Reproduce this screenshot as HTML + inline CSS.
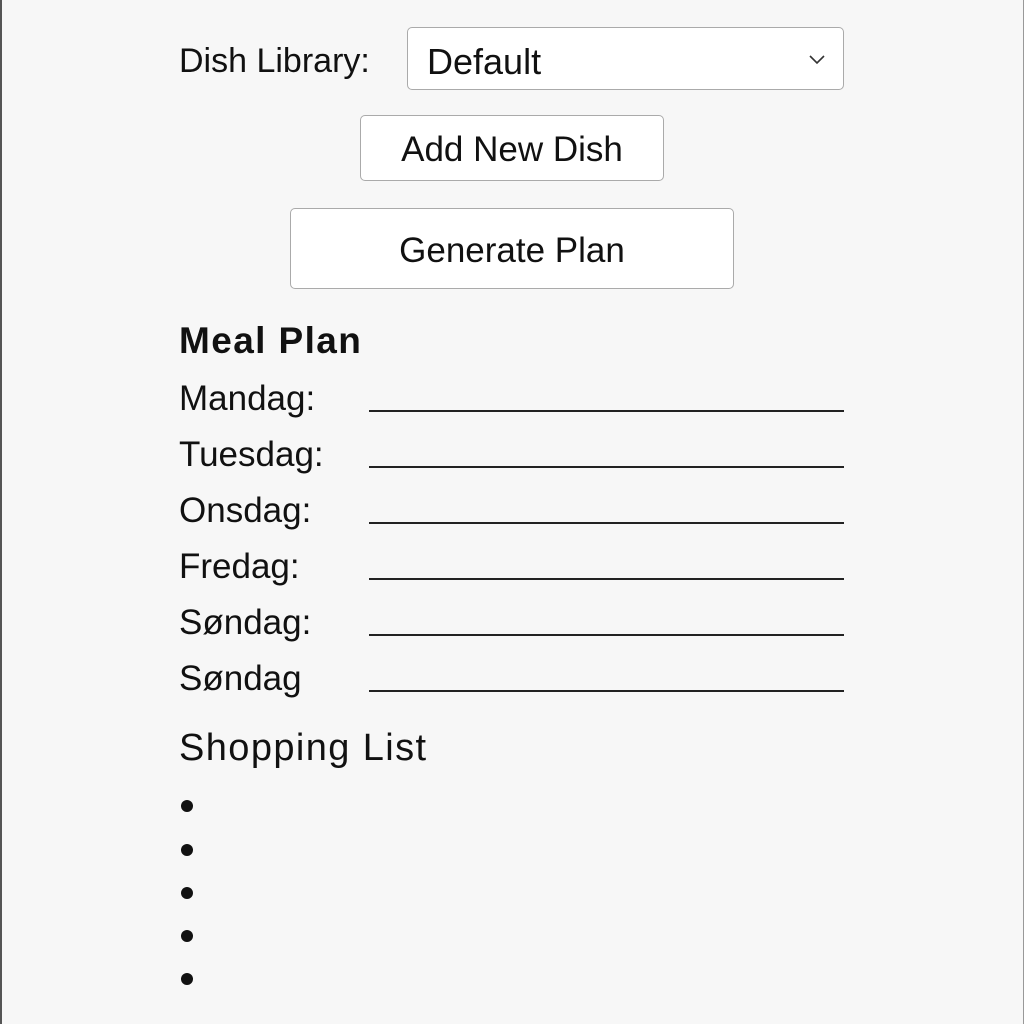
<!DOCTYPE html>
<html><head><style>
body{margin:0;width:1024px;height:1024px;background:#f7f7f7;font-family:"Liberation Sans",sans-serif;color:#111;position:relative;overflow:hidden}
.b{position:absolute;left:0;top:0;width:2px;height:1024px;background:#555}
.br{position:absolute;right:0;top:0;width:1px;height:1024px;background:#999}
.t{position:absolute;white-space:nowrap;line-height:1}
.box{position:absolute;background:#fff;border:1px solid #aaa;border-radius:5px;box-sizing:border-box}
.ln{position:absolute;left:369px;width:475px;height:2px;background:#222}
.dot{position:absolute;left:181px;width:12px;height:12px;border-radius:50%;background:#111}
</style></head><body>
<div class="b"></div><div class="br"></div>
<div class="t" style="left:179px;top:44px;font-size:34px">Dish Library:</div>
<div class="box" style="left:407px;top:27px;width:437px;height:63px"></div>
<div class="t" style="left:427px;top:44px;font-size:36px">Default</div>
<svg style="position:absolute;left:808px;top:53px" width="18" height="12"><path d="M2 3 L9 10 L16 3" fill="none" stroke="#333" stroke-width="1.6"/></svg>
<div class="box" style="left:360px;top:115px;width:304px;height:66px"></div>
<div class="t" style="left:360px;width:304px;text-align:center;top:132px;font-size:35px">Add New Dish</div>
<div class="box" style="left:290px;top:208px;width:444px;height:81px"></div>
<div class="t" style="left:290px;width:444px;text-align:center;top:233px;font-size:35px">Generate Plan</div>
<div class="t" style="left:179px;top:322px;font-size:37px;font-weight:bold;letter-spacing:1.4px">Meal Plan</div>
<div class="t" style="left:179px;top:381px;font-size:35px">Mandag:</div><div class="ln" style="top:410px"></div>
<div class="t" style="left:179px;top:437px;font-size:35px">Tuesdag:</div><div class="ln" style="top:466px"></div>
<div class="t" style="left:179px;top:493px;font-size:35px">Onsdag:</div><div class="ln" style="top:522px"></div>
<div class="t" style="left:179px;top:549px;font-size:35px">Fredag:</div><div class="ln" style="top:578px"></div>
<div class="t" style="left:179px;top:605px;font-size:35px">Søndag:</div><div class="ln" style="top:634px"></div>
<div class="t" style="left:179px;top:661px;font-size:35px">Søndag</div><div class="ln" style="top:690px"></div>
<div class="t" style="left:179px;top:729px;font-size:38px;letter-spacing:1.4px">Shopping List</div>
<div class="dot" style="top:800px"></div>
<div class="dot" style="top:844px"></div>
<div class="dot" style="top:887px"></div>
<div class="dot" style="top:930px"></div>
<div class="dot" style="top:973px"></div>
</body></html>
